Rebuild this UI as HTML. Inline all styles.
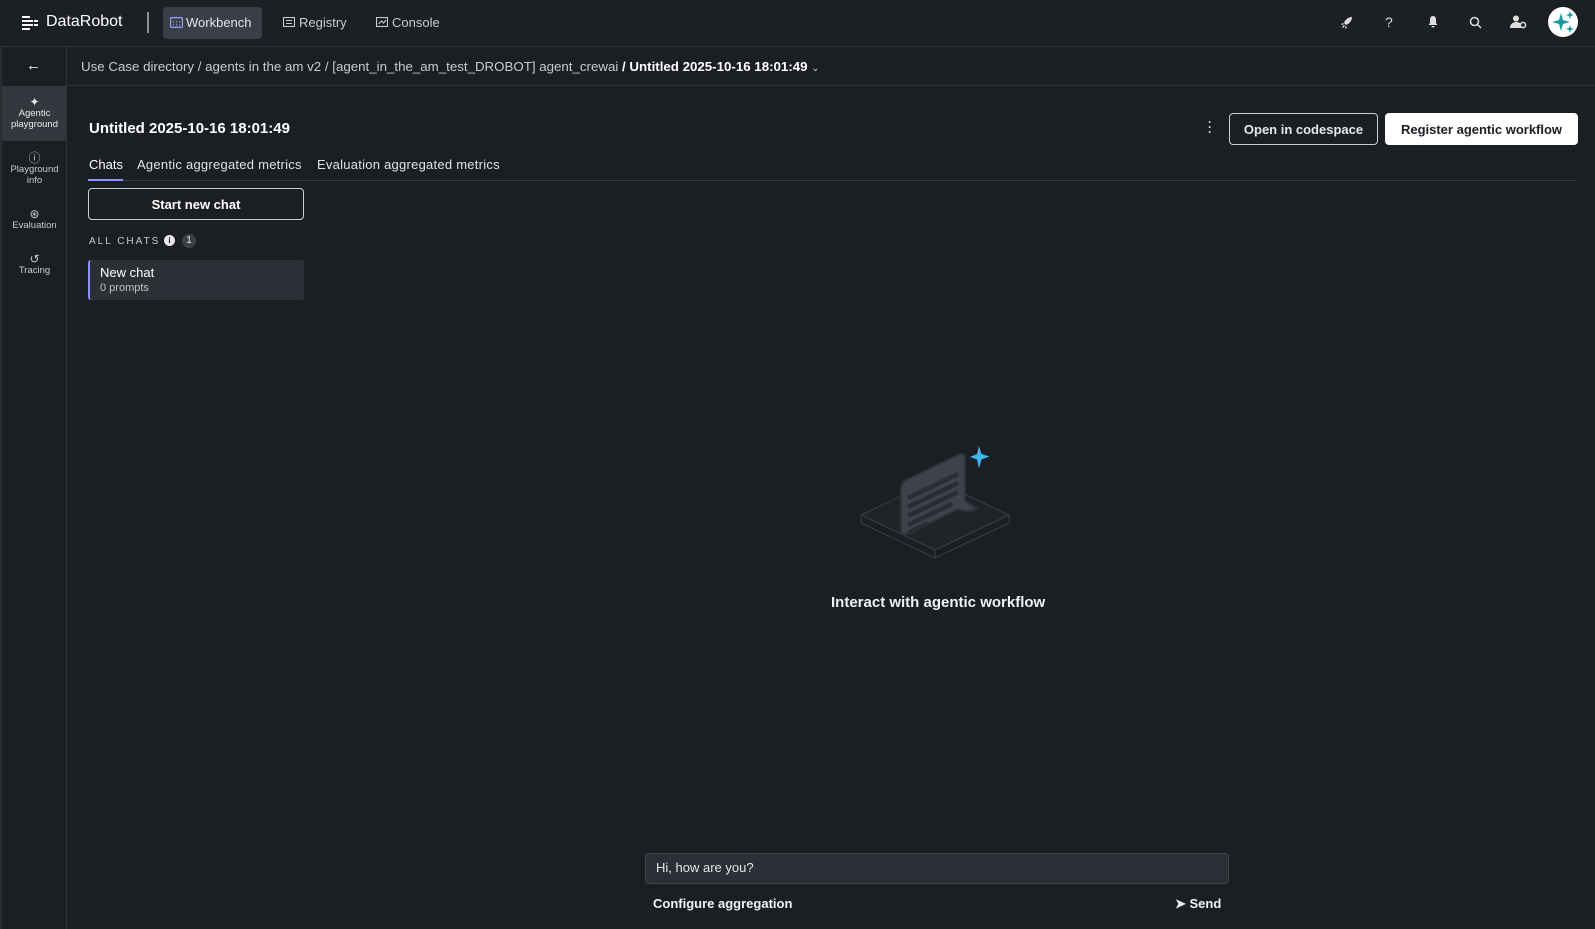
<!DOCTYPE html>
<html><head><meta charset="utf-8"><style>
*{box-sizing:border-box;margin:0;padding:0}
body{width:1595px;height:929px;background:#1b1e22;color:#e4e6ea;font-family:"Liberation Sans",sans-serif;position:relative;overflow:hidden;font-size:13px}
.abs{position:absolute}
.top{left:0;top:0;width:1595px;height:47px;border-bottom:1px solid #30343a;background:#1c1f23}
.side{left:0;top:47px;width:67px;height:882px;border-right:1px solid #30343a;border-left:2px solid #2a2d32}
.crumb{left:67px;top:47px;right:0;height:39px;border-bottom:1px solid #30343a}
.si{width:65px;text-align:center;font-size:9.5px;color:#c8cbd0;line-height:11px}
.btn{border:1px solid #c9ccd1;border-radius:4px;font-weight:bold;font-size:13px;display:flex;align-items:center;justify-content:center}
</style></head><body>
<div class="abs top"></div>
<svg class="abs" style="left:22px;top:15px" width="18" height="16" viewBox="0 0 18 16" fill="#fff"><rect x="0" y="1" width="8" height="2"/><rect x="0" y="5" width="11" height="2"/><rect x="0" y="9" width="11" height="2"/><rect x="0" y="13" width="8" height="2"/><rect x="12" y="5" width="4" height="2"/><rect x="12" y="9" width="4" height="2"/></svg>
<div class="abs" style="left:46px;top:13px;font-size:16px;color:#fff">DataRobot</div>
<div class="abs" style="left:147px;top:12px;width:2px;height:21px;background:#8a8e95"></div>
<div class="abs" style="left:163px;top:7px;width:99px;height:32px;background:#3a3e46;border-radius:4px"></div>
<svg class="abs" style="left:170px;top:17px" width="13" height="11" viewBox="0 0 13 11" fill="none" stroke="#9aa3ff" stroke-width="1.2"><rect x=".6" y=".6" width="11.8" height="9.8" rx="1"/><path d="M3 5h1M6 5h1M9 5h1M3 8h1M6 8h1M9 8h1"/></svg>
<div class="abs" style="left:186px;top:15px;font-size:13px;color:#e4e6ea">Workbench</div>
<svg class="abs" style="left:283px;top:17px" width="12" height="10" fill="none" stroke="#c9ccd1" stroke-width="1.1"><rect x=".5" y=".5" width="11" height="9"/><path d="M3 3.5h6M3 6.5h6"/></svg>
<div class="abs" style="left:299px;top:15px;color:#c9ccd1">Registry</div>
<svg class="abs" style="left:376px;top:17px" width="12" height="10" fill="none" stroke="#c9ccd1" stroke-width="1.1"><rect x=".5" y=".5" width="11" height="9"/><path d="M2.5 7l3-3 2 2 2.5-3"/></svg>
<div class="abs" style="left:392px;top:15px;color:#c9ccd1">Console</div>
<svg class="abs" style="left:1340px;top:16px" width="13" height="13" viewBox="0 0 13 13" fill="#ddd"><path d="M12 1C8 1 5 4 4 7l2 2c3-1 6-4 6-8zM3 7L1 8l1 1 2-1zM6 10l-1 2 1 1 1-2zM2 11l2-2 1 1-2 2z"/></svg>
<div class="abs" style="left:1385px;top:14px;font-size:14px;color:#ddd">?</div>
<svg class="abs" style="left:1427px;top:15px" width="12" height="13" fill="#ddd"><path d="M6 1C3.5 1 3 3 3 5v3L1.5 10h9L9 8V5C9 3 8.5 1 6 1zM4.5 11h3a1.5 1.5 0 01-3 0z"/></svg>
<svg class="abs" style="left:1469px;top:16px" width="13" height="13" fill="none" stroke="#ddd" stroke-width="1.5"><circle cx="5.5" cy="5.5" r="4"/><path d="M8.5 8.5l3.5 3.5"/></svg>
<svg class="abs" style="left:1510px;top:15px" width="17" height="14" fill="#ddd"><circle cx="6" cy="3.5" r="3"/><path d="M0 13c0-4 3-6 6-6s4 1 5 2v4z"/><circle cx="13" cy="10" r="2.6" fill="none" stroke="#ddd" stroke-width="1.5"/></svg>
<div class="abs" style="left:1548px;top:7px;width:30px;height:30px;border-radius:50%;background:#fff"></div>
<svg class="abs" style="left:1550px;top:9px" width="26" height="26" viewBox="0 0 26 26" fill="#1a9aa0"><path d="M11 4l2 7 7 2-7 2-2 7-2-7-7-2 7-2z"/><path d="M20 2l1 3 3 1-3 1-1 3-1-3-3-1 3-1z"/><path d="M20 16l1 3 3 1-3 1-1 3-1-3-3-1 3-1z"/></svg>
<div class="abs side"></div>
<div class="abs" style="left:26px;top:57px;font-size:15px;color:#fff">&#8592;</div>
<div class="abs" style="left:2px;top:86px;width:64px;height:55px;background:#33373e"></div>
<div class="abs si" style="left:2px;top:96px;color:#e8eaed"><div style="font-size:12px;line-height:12px">✦</div>Agentic<br>playground</div>
<div class="abs si" style="left:2px;top:152px"><div style="font-size:12px;line-height:12px">ⓘ</div>Playground<br>info</div>
<div class="abs si" style="left:2px;top:208px"><div style="font-size:12px;line-height:12px">⊛</div>Evaluation</div>
<div class="abs si" style="left:2px;top:253px"><div style="font-size:12px;line-height:12px">↺</div>Tracing</div>
<div class="abs crumb"></div>
<div class="abs" style="left:81px;top:59px;font-size:13.3px;color:#c9ccd1">Use Case directory / agents in the am v2 / [agent_in_the_am_test_DROBOT] agent_crewai <b style="color:#fff">/ Untitled 2025-10-16 18:01:49</b> <span style="font-size:10px">&#8964;</span></div>
<div class="abs" style="left:89px;top:120px;font-size:15px;font-weight:bold;color:#fff">Untitled 2025-10-16 18:01:49</div>
<div class="abs" style="left:1208px;top:120px;font-size:12px;font-weight:bold;color:#ddd;line-height:5px">·<br>·<br>·</div>
<div class="abs btn" style="left:1229px;top:113px;width:149px;height:32px;color:#e6e8eb">Open in codespace</div>
<div class="abs btn" style="left:1385px;top:113px;width:193px;height:32px;background:#fff;border-color:#fff;color:#1b1e22">Register agentic workflow</div>
<div class="abs" style="left:88px;top:180px;width:1489px;height:1px;background:#3a3e45"></div>
<div class="abs" style="left:88px;top:179px;width:35px;height:2px;background:#8c93ff"></div>
<div class="abs" style="left:89px;top:157px;color:#fff">Chats</div>
<div class="abs" style="left:137px;top:157px;color:#e0e2e6;letter-spacing:.25px">Agentic aggregated metrics</div>
<div class="abs" style="left:317px;top:157px;color:#e0e2e6;letter-spacing:.25px">Evaluation aggregated metrics</div>
<div class="abs btn" style="left:88px;top:188px;width:216px;height:32px;color:#fff">Start new chat</div>
<div class="abs" style="left:89px;top:236px;font-size:10px;letter-spacing:2px;color:#c9ccd1">ALL CHATS</div>
<div class="abs" style="left:164px;top:235px;width:11px;height:11px;border-radius:50%;background:#e8e8e8;color:#1b1e22;font-size:8px;text-align:center;line-height:11px;font-weight:bold">i</div>
<div class="abs" style="left:182px;top:234px;width:14px;height:14px;border-radius:50%;background:#3c4047;font-size:10px;text-align:center;line-height:14px">1</div>
<div class="abs" style="left:88px;top:260px;width:216px;height:40px;background:#2c3036;border-left:2px solid #8c93ff;border-radius:3px"></div>
<div class="abs" style="left:100px;top:265px;font-size:13px;color:#fff">New chat</div>
<div class="abs" style="left:100px;top:282px;font-size:11px;color:#c0c3c8">0 prompts</div>
<svg class="abs" style="left:855px;top:440px" width="160" height="130" viewBox="0 0 160 130">
<path d="M6 75L80 40 154 75 80 110z" fill="#202327" stroke="#3a3e44"/>
<path d="M6 75v8l74 35v-8zM154 75v8l-74 35v-8z" fill="#1c1f22" stroke="#3a3e44"/>
<path d="M46 50q0-8 7-11l50-24q7-3 7 4v42l12 8q-9 4-19 0l-49 24q-8 4-8-4z" fill="#3e434b" stroke="#30343a" stroke-width="2"/>
<path d="M53 58l50-24M53 67l50-24M53 76l50-24M53 85l44-21M53 93l20-10" stroke="#2a2e34" stroke-width="4.5"/>
<path d="M124 6l2.5 8 8 2.5-8 3-2.5 9-2-9-7-2.5 7-3z" fill="#3fb6f0"/>
</svg>
<div class="abs" style="left:831px;top:594px;font-size:15px;font-weight:bold;color:#f0f2f4">Interact with agentic workflow</div>
<div class="abs" style="left:645px;top:853px;width:584px;height:31px;background:#2c3036;border:1px solid #40444b;border-radius:4px"></div>
<div class="abs" style="left:656px;top:860px;color:#e4e6ea">Hi, how are you?</div>
<div class="abs" style="left:653px;top:896px;font-weight:bold;color:#f0f2f4">Configure aggregation</div>
<div class="abs" style="left:1175px;top:896px;font-weight:bold;color:#f0f2f4">➤ Send</div>
</body></html>
